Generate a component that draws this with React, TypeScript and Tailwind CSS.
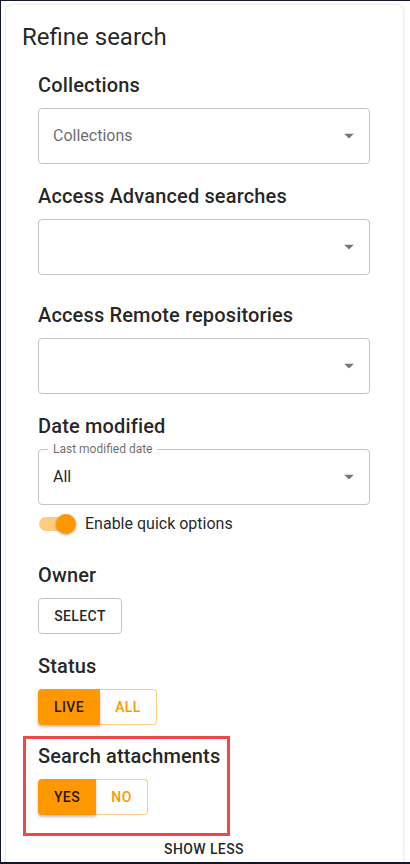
import React from 'react';

const font = { fontFamily: 'Roboto, "Noto Sans", Arial, sans-serif' };

function Caret() {
  return (
    <svg width="10" height="5" viewBox="0 0 10 5" className="absolute right-[15px] top-1/2 -translate-y-1/2">
      <path d="M0 0 L5 5 L10 0 Z" fill="rgba(0,0,0,0.54)" />
    </svg>
  );
}

function SelectBox({ value, placeholder, label }: { value?: string; placeholder?: string; label?: string }) {
  return (
    <div className="relative h-[56px] w-[332px] rounded-[4px] border border-[#c4c4c4]">
      {label && (
        <span className="absolute -top-[8px] left-[9px] bg-white px-[5px] text-[12px] leading-[14px] text-[rgba(0,0,0,0.6)]">
          {label}
        </span>
      )}
      <div className="flex h-full items-center pl-[14px] text-[16px]">
        {value && <span className="text-[rgba(0,0,0,0.87)]">{value}</span>}
        {placeholder && <span className="text-[rgba(0,0,0,0.6)]">{placeholder}</span>}
      </div>
      <Caret />
    </div>
  );
}

function Heading({ children }: { children: React.ReactNode }) {
  return <h3 className="text-[20px] font-medium leading-[32px] tracking-[0.15px] text-[rgba(0,0,0,0.87)]">{children}</h3>;
}

function Toggle({ on, off, onW, offW }: { on: string; off: string; onW: string; offW: string }) {
  return (
    <div className="flex h-[36px]">
      <div className={`${onW} flex items-center justify-center rounded-l-[4px] bg-[#ff9800] text-[14px] font-medium tracking-[0.4px] text-[rgba(0,0,0,0.87)] shadow-[0_2px_3px_rgba(0,0,0,0.25)]`}>
        {on}
      </div>
      <div className={`${offW} flex items-center justify-center rounded-r-[4px] border border-l-0 border-[#ffcc80] text-[14px] font-medium tracking-[0.4px] text-[#ff9800]`}>
        {off}
      </div>
    </div>
  );
}

export default function App() {
  return (
    <div style={font} className="h-[864px] w-[410px] overflow-hidden border-b-2 border-l border-t border-[#111827] bg-white pl-[5px] pt-[4px]">
      <div className="h-[900px] w-[397px] rounded-[6px] bg-white pl-[16px] pt-[16px] shadow-[0_0_3px_rgba(0,0,0,0.2)]">
        <h2 className="text-[24px] leading-[32px] text-[rgba(0,0,0,0.87)]">Refine search</h2>

        <div className="pl-[16px] pt-[16px]">
          <Heading>Collections</Heading>
          <div className="pt-[7px]">
            <SelectBox placeholder="Collections" />
          </div>

          <div className="pt-[16px]">
            <Heading>Access Advanced searches</Heading>
          </div>
          <div className="pt-[7px]">
            <SelectBox />
          </div>

          <div className="pt-[24px]">
            <Heading>Access Remote repositories</Heading>
          </div>
          <div className="pt-[7px]">
            <SelectBox />
          </div>

          <div className="pt-[16px]">
            <Heading>Date modified</Heading>
          </div>
          <div className="pt-[7px]">
            <SelectBox label="Last modified date" value="All" />
          </div>

          <div className="flex h-[37px] items-center">
            <div className="relative ml-[1px] h-[14px] w-[34px] rounded-full bg-[#ffcb7f]">
              <div className="absolute -top-[3px] left-[17px] h-[20px] w-[20px] rounded-full bg-[#ff9800] shadow-[0_1px_3px_rgba(0,0,0,0.35)]" />
            </div>
            <span className="pl-[12px] text-[16px] text-[rgba(0,0,0,0.87)]">Enable quick options</span>
          </div>

          <div className="pt-[17px]">
            <Heading>Owner</Heading>
          </div>
          <div className="pt-[7px]">
            <div className="flex h-[36px] w-[84px] items-center justify-center rounded-[4px] border border-[#c4c4c4] text-[14px] font-medium tracking-[0.4px] text-[rgba(0,0,0,0.87)]">
              SELECT
            </div>
          </div>

          <div className="pt-[16px]">
            <Heading>Status</Heading>
          </div>
          <div className="pt-[7px]">
            <Toggle on="LIVE" off="ALL" onW="w-[62px]" offW="w-[57px]" />
          </div>

          <div className="-ml-[15px] mt-[11px] h-[100px] w-[207px] border-[3px] border-[#f04848] pl-[12px] pt-[1px]">
            <Heading>Search attachments</Heading>
            <div className="pt-[7px]">
              <Toggle on="YES" off="NO" onW="w-[58px]" offW="w-[52px]" />
            </div>
          </div>

          <div className="w-[332px] pt-[3px] text-center text-[14px] font-medium leading-[20px] tracking-[0.4px] text-[rgba(0,0,0,0.87)]">
            SHOW LESS
          </div>
        </div>
      </div>
    </div>
  );
}
